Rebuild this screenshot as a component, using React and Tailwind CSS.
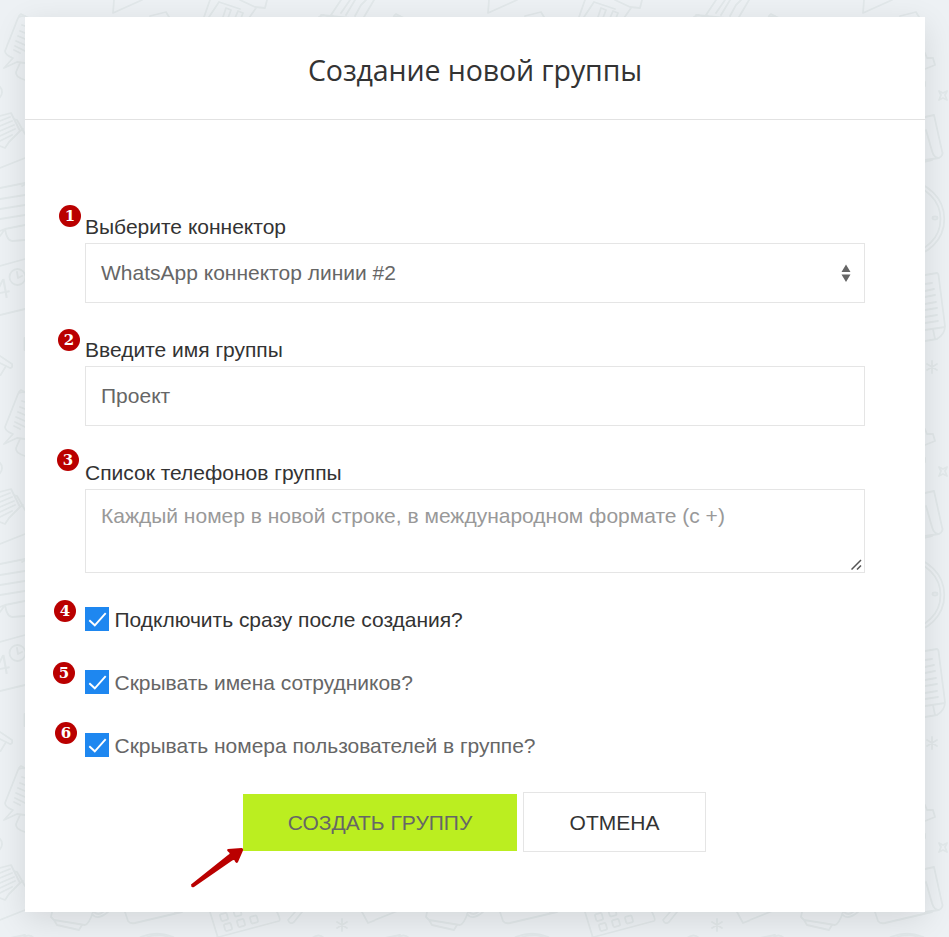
const calcKeys = [[224, 165], [237.5, 160.5], [228, 175], [241, 171], [254, 167.5]];

function Doodles() {
  return (
    <svg className="absolute inset-0 h-full w-full" aria-hidden="true">
      <defs>
        <pattern id="doodles" width="375" height="376" patternUnits="userSpaceOnUse">
          <g fill="none" stroke="#e2e8ea" strokeWidth="1.8" strokeLinecap="round" strokeLinejoin="round">
            {/* chat sheet */}
            <path d="M25 16 L21 14 Q19 15 18 18 L5 51 Q5 55 13 58 L4 68 L17 62 L25 63 M20 63 L16 72 Q15 77 25 80" />
            <path d="M22 25 L25 26 M20 31 L25 33 M18 36 L25 39 M16 41 L25 45 M15 46 L25 51 M14 50 L20 53" />
            <circle cx="-6" cy="92" r="8" />
            {/* stack of papers */}
            <path d="M0 116 L11 113 L20 131 L9 142 L5 148 L0 146 M14 119 L17 120 L25 134 M20 131 L23 129" />
            <path d="M0 121 L10 117 M0 126 L12 121 M0 131 L14 125 M0 136 L15 129 M0 141 L12 135" />
            <path d="M0 168 L25 158 M0 188 L25 183 M0 199 L25 195 M0 209 L25 205 M0 219 L25 215 M0 231 L5 229 L25 225 M5 229 Q7 241 12 241 L25 240 M0 236 L5 229" />
            {/* calendar */}
            <path d="M0 266 L25 259 M0 315 L25 309 M17 272 L18 278 L22 276 M24.5 338 V350" />
            <circle cx="17.5" cy="277" r="8" />
            <text x="-4" y="299" fontSize="27" fontFamily="Lato" fill="#e2e8ea" stroke="none" transform="rotate(-10 0 299)">4</text>
            <path d="M0 356 L12 364 Q13 368 10 368 L0 363 M6 366 L0 376" />
            {/* right column */}
            <path d="M175 53 L177 58 L183 58 L185 65 L175 69 M175 82 V86" />
            <path d="M189 91 L193 93 L197 91 L195 95 L197 100 L193 98 L189 100 L191 95 Z" />
            <path d="M175 117 L184 115 L192 151 Q194 155 189 158 L175 160 M176 130 L182 151 Q184 158 189 158" />
            <circle cx="157" cy="219" r="37.3" />
            <circle cx="157" cy="219" r="33.5" />
            <ellipse cx="185" cy="218" rx="2.5" ry="1.5" />
            <path d="M175 275 L187 273 Q188 273 188.500 275 L195 326 Q195 334 187 339 L175 341 M175 330 L195 327 M183 329 L185 339" />
            <path d="M175 284 L182 283 M175 291 L184 289 M175 297 L185 295 M175 304 L186 302 M175 310 L187 308 M175 317 L187 315 M175 323 L188 321" />
            <path d="M182 361 V373 M177 364 L187 370 M187 364 L177 370" />
            {/* upper edge */}
            <path d="M114 0 L113 13 L142 0 M150 16 L166 12 L169 17 M210 0 L204 17 M219 2 L209 17 M219 2 L240 9 M240 0 L255 7 L265 8 L267 0 M256 8 L249 18 M223 17 L226 8 L231 10 L228 18 M235 18 L238 11 L243 13 L241 18" />
            <path d="M319 17 Q324 13 331 18 M331 15 L341 0 M331 15 L340 19 M321 15 L350 18 M364 17 L374 0 M341 13 L350 0 M346 15 L355 0 M355 16 L361 5 L366 0 M19 17 Q24 15 29 18" />
            {/* lower edge */}
            <path d="M52 160 L51 165 L54 168 L85 173 Q89 172 93 160 M54 168 L57 173 L79 178 L82 173 M92 162 Q97 169 108 160 M94 160 Q98 164 103 160" />
            <path d="M125 160 L128 169 Q130 172 135 171 L182 160 M210 160 L218 186 M215 186 L279 169 Q281 168 277 160 M295 160 L288 168 Q290 173 294 170 L302 160 M362 160 L368 171 L378 167" />
            <path d="M342 167 V179 M337 170 L347 176 M347 170 L337 176 M145 186 Q158 180 171 186 M312 186 Q319 181 324 186 M22 186 Q29 181 34 186" />
            {calcKeys.map(([x, y]) => (
              <rect key={x} x={x - 3.5} y={y - 3.5} width="7" height="7" rx="1.500" transform={`rotate(-15 ${x} ${y})`} />
            ))}
          </g>
        </pattern>
      </defs>
      <rect width="100%" height="100%" fill="url(#doodles)" />
    </svg>
  );
}

function Badge({ n, className }) {
  return (
    <span className={`absolute flex h-[22px] w-[22px] items-center justify-center rounded-full bg-[#ba0000] pt-px font-['DejaVu_Serif',serif] text-[15px] leading-none font-bold text-white ${className}`}>
      {n}
    </span>
  );
}

function Check({ n, badge, className, children }) {
  return (
    <label className={`relative flex h-6 items-center gap-[5.5px] ${className}`}>
      <Badge n={n} className={badge} />
      <span className="flex h-6 w-6 items-center justify-center bg-[#1e87f0]">
        <svg width="24" height="24" viewBox="0 0 24 24" fill="none" stroke="#fff" strokeWidth="1.900">
          <path d="M4.300 13.200 L9.800 18.300 L20.700 6.200" />
        </svg>
      </span>
      <span className="relative top-px tracking-[-0.02px] whitespace-nowrap">{children}</span>
    </label>
  );
}

export default function App() {
  return (
    <div className="relative h-[937px] w-[949px] overflow-hidden bg-[#edf1f4] px-[25px] pt-[17px] font-['Liberation_Sans',Arial,sans-serif] text-[21px] leading-[32px] text-[#666]">
      <Doodles />
      <main className="relative h-[895px] w-[900px] bg-white shadow-[0_8px_30px_rgba(0,0,0,0.11)]">
        <header className="flex h-[103px] items-center justify-center border-b border-[#e2e2e2]">
          <h1 className="relative top-[2px] font-['Open_Sans',sans-serif] text-[28.5px] tracking-[-0.1px] whitespace-nowrap text-[#333]">Создание новой группы</h1>
        </header>
        <form className="px-[60px] pt-[91px]">
          <div className="relative">
            <Badge n="1" className="-left-[26px] -top-[6px]" />
            <div className="h-8 text-[#333]">Выберите коннектор</div>
            <div className="flex h-[60px] items-center justify-between border border-[#e5e5e5] pr-[13px] pl-[15px]">
              <span>WhatsApp коннектор линии #2</span>
              <svg width="10" height="18" viewBox="0 0 10 18" fill="#666">
                <path d="M0.500 8 L5 0.500 L9.500 8 Z M0.500 10.500 L5 18 L9.500 10.500 Z" />
              </svg>
            </div>
          </div>
          <div className="relative mt-[31px]">
            <Badge n="2" className="-left-[27px] -top-[5px]" />
            <div className="h-8 text-[#333]">Введите имя группы</div>
            <div className="flex h-[60px] items-center border border-[#e5e5e5] px-[15px]">Проект</div>
          </div>
          <div className="relative mt-[31px]">
            <Badge n="3" className="-left-[28px] -top-[8px]" />
            <div className="h-8 text-[#333]">Список телефонов группы</div>
            <div className="relative h-[84px] border border-[#e5e5e5] px-[15px] pt-[10px] whitespace-nowrap text-[#999]">
              Каждый номер в новой строке, в международном формате (с +)
              <svg className="absolute right-[2px] bottom-[2px]" width="11" height="11" viewBox="0 0 11 11" stroke="#555" strokeWidth="1.500">
                <path d="M0.500 10.500 L10 1 M6 10.500 L10 6.500" />
              </svg>
            </div>
          </div>
          <Check n="4" badge="-left-[31px] -top-[7px]" className="mt-[34px] text-[#333]">Подключить сразу после создания?</Check>
          <Check n="5" badge="-left-[32px] -top-[8px]" className="mt-[39px]">Скрывать имена сотрудников?</Check>
          <Check n="6" badge="-left-[30px] -top-[11px]" className="mt-[39px]">Скрывать номера пользователей в группе?</Check>
          <div className="relative mt-[35px] flex items-center pl-[158px]">
            <button type="button" className="mt-px h-[57px] w-[274px] bg-[#bbee20] whitespace-nowrap">СОЗДАТЬ ГРУППУ</button>
            <button type="button" className="ml-[6px] h-[60px] w-[183px] border border-[#e5e5e5] pt-[2px] text-[#333]">ОТМЕНА</button>
            <svg className="absolute top-[54px] left-[105px]" width="55" height="42" viewBox="0 0 55 42" fill="#ba0000">
              <path d="M1 38.500 L38 9 Q41 7.500 38.500 6 Q36 4 38 3 L51.500 2 Q53.500 2 53 4.500 L48 16 Q46.500 18 45 15.500 Q44.500 13 41.500 15 L4 41 Q1 42 1 38.500 Z" />
            </svg>
          </div>
        </form>
      </main>
    </div>
  );
}
